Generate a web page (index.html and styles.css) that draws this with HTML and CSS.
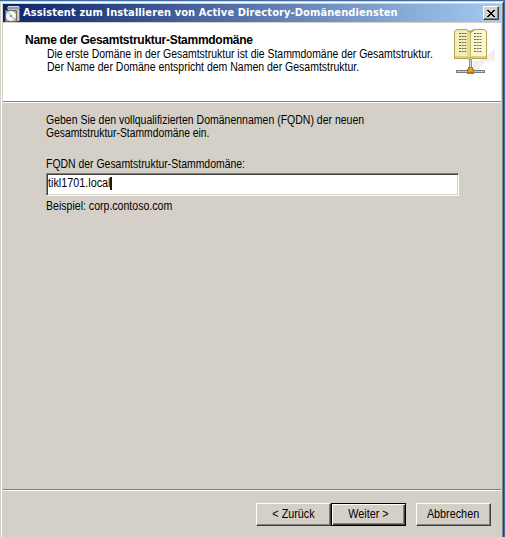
FILE: index.html
```html
<!DOCTYPE html>
<html lang="de">
<head>
<meta charset="utf-8">
<title>Assistent zum Installieren von Active Directory-Domänendiensten</title>
<link rel="stylesheet" href="styles.css">
</head>
<body>
<div class="window">
  <div class="titlebar">
    <svg class="app-icon" width="16" height="17" viewBox="0 0 16 17">
      <path d="M3 1h11v1H3z" fill="#d8dce8"/><path d="M2 2h13v2H2z" fill="#8c98b4"/>
      <path d="M3 4h11v2H3z" fill="#e3c54a"/><path d="M11 5h4v11h-4z" fill="#c9c7bc"/>
      <path d="M14 5h1v11h-1z" fill="#77776e"/>
      <path d="M.5 5.500h11v11H.5z" fill="#a4a49c" stroke="#6c6c66"/>
      <circle cx="6" cy="11" r="5" fill="#f7f9f6"/>
      <path d="M6 11L2 8 5 6.500z" fill="#bde0c0"/><path d="M6 11l4 2-2 2z" fill="#d6c5e4"/>
      <circle cx="6" cy="11" r="1" fill="#696b70"/>
    </svg>
    <span class="title">Assistent zum Installieren von Active Directory-Domänendiensten</span>
    <button class="close" aria-label="Schließen"><svg width="8" height="7" viewBox="0 0 8 7" shape-rendering="crispEdges"><path d="M0 0h2v1h1v1h2V1h1V0h2v1H7v1H6v1H5v1h1v1h1v1h1v1H6V6H5V5H3v1H2v1H0V6h1V5h1V4h1V3H2V2H1V1H0z"/></svg></button>
  </div>
  <header class="banner">
    <div class="banner-text">
      <h1>Name der Gesamtstruktur-Stammdomäne</h1>
      <p><span class="narrow">Die erste Domäne in der Gesamtstruktur ist die Stammdomäne der Gesamtstruktur.</span><br><span class="narrow loose">Der Name der Domäne entspricht dem Namen der Gesamtstruktur.</span></p>
    </div>
    <svg class="book" width="44" height="48" viewBox="0 0 44 48">
      <path d="M20 33h6l16-12v12l-10 1-8 9h-4z" fill="#f0f0f1"/>
      <path d="M1 3l3-2h9l4 2 4-2h10l3 2v28H20l-2 1h-2l-2-1H1z" fill="#b3a153"/>
      <path d="M2 3l3-1h8l4 3v24l-4-1H2z" fill="#f3edb8"/>
      <path d="M33 3l-3-1h-8l-4 3v24l4-1h11z" fill="#fbf7d0"/>
      <path d="M2 28h11l4 2h1l4-2h11v2H20l-2 1h-2l-2-1H2z" fill="#ded180"/>
      <path d="M14 3l3 2v24l-3-1z" fill="#e5db92"/><path d="M17 4h1v27h-1z" fill="#c3b45f"/>
      <path d="M6 5.500h8M6 8.500h8M6 11.500h8M6 14.500h8M6 17.500h8M6 20.500h8M6 23.500h8M21 5.500h8M21 8.500h8M21 11.500h8M21 14.500h8M21 17.500h8M21 20.500h8M21 23.500h8" stroke="#6f6b4e" stroke-dasharray="2 .7"/>
      <path d="M16 32h3v8h-3z" fill="#888d91"/><path d="M17 32h1v8h-1z" fill="#d3d8dc"/>
      <path d="M3 42h29v3H3z" fill="#777c80"/><path d="M4 43h27v1H4z" fill="#c5c9cc"/>
      <path d="M15 39h5v2h1v5h-7v-5h1z" fill="#b5750c"/><path d="M16 40h3v2h1v2h-5v-2h1z" fill="#e8a01c"/>
    </svg>
  </header>
  <main>
    <p class="intro"><span class="narrow loose">Geben Sie den vollqualifizierten Domänennamen (FQDN) der neuen</span><br><span class="narrow tight">Gesamtstruktur-Stammdomäne ein.</span></p>
    <div class="label"><span class="narrow">FQDN der Gesamtstruktur-Stammdomäne:</span></div>
    <div class="field"><span class="narrow value">tikl1701.local<span class="caret"></span></span></div>
    <div class="example"><span class="narrow wide">Beispiel: corp.contoso.com</span></div>
  </main>
  <footer>
    <button class="btn"><span class="narrow">&lt; Zurück</span></button>
    <button class="btn default"><span class="narrow">Weiter &gt;</span></button>
    <button class="btn cancel"><span class="narrow">Abbrechen</span></button>
  </footer>
</div>
</body>
</html>
```
FILE: styles.css
```css
* { box-sizing: border-box; }
body {
  margin: 0;
  width: 505px;
  height: 537px;
  overflow: hidden;
  padding: 1px 1px 0 0;
  background: #3a6ea5;
  font: 12px/13px "Liberation Sans", Arial, sans-serif;
  color: #000;
}
h1, p { margin: 0; }
span { white-space: nowrap; }
.narrow { display: inline-block; vertical-align: top; transform: scaleX(.87); transform-origin: 0 50%; }
.tight { transform: scaleX(.86); }
.loose { transform: scaleX(.875); }
.wide { transform: scaleX(.88); }
.window {
  height: 536px;
  display: flex;
  flex-direction: column;
  background: #d4d0c8;
  border: solid;
  border-width: 1px 1px 0;
  border-color: #d4d0c8 #404040 #d4d0c8 #d4d0c8;
  box-shadow: inset 1px 1px #fff, inset -1px 0 #808080;
  padding: 2px 2px 0;
}
.titlebar {
  height: 18px;
  flex: none;
  display: flex;
  align-items: center;
  padding: 0 2px;
  background: linear-gradient(90deg, #0a246a, #a6caf0);
}
.app-icon { flex: none; margin-right: 2px; }
.title {
  flex: 1;
  color: #fff;
  font: bold 11px/16px "DejaVu Sans Condensed", "DejaVu Sans", sans-serif;
  letter-spacing: .1px;
}
button { font: inherit; color: inherit; padding: 0; margin: 0; border-radius: 0; background: #d4d0c8; }
.close {
  width: 16px;
  height: 14px;
  display: flex;
  align-items: center;
  justify-content: center;
  border: 1px solid;
  border-color: #fff #404040 #404040 #fff;
  box-shadow: inset -1px -1px #808080;
}
.banner {
  height: 79px;
  flex: none;
  display: flex;
  margin-top: 1px;
  padding: 5px 4px 0 22px;
  background: #fff;
  border-bottom: 1px solid #808080;
  box-shadow: 0 1px #fff;
}
.banner-text { flex: 1; min-width: 0; padding-top: 6px; }
h1 { font: bold 12px/13px "Liberation Sans", Arial, sans-serif; letter-spacing: -.28px; white-space: nowrap; margin-bottom: 1px; }
.banner p { padding-left: 22px; }
.book { flex: none; }
main { flex: 1; padding: 12px 43px 0; }
.label { margin-top: 18px; }
.field {
  width: 413px;
  height: 23px;
  margin-top: 2px;
  display: flex;
  padding: 3px 1px 0;
  background: #fff;
  border: 1px solid;
  border-color: #808080 #fff #fff #808080;
  box-shadow: inset 1px 1px #404040, inset -1px -1px #d4d0c8;
}
.value { height: 13px; transform: scaleX(.9); }
.caret { display: inline-block; vertical-align: top; width: 1.200px; height: 13px; background: #000; }
.example { margin-top: 4px; }
footer {
  height: 48px;
  flex: none;
  display: flex;
  padding: 13px 0 0 253px;
  border-top: 1px solid #808080;
  box-shadow: inset 0 1px #fff;
}
.btn {
  width: 75px;
  height: 23px;
  border: 1px solid;
  border-color: #fff #404040 #404040 #fff;
  box-shadow: inset -1px -1px #808080;
}
.btn .narrow { transform: scaleX(.9); transform-origin: 50% 50%; }
.default { border-color: #000; box-shadow: inset 1px 1px #fff, inset -1px -1px #404040, inset -2px -2px #808080; }
.cancel { margin-left: 10px; }
```
